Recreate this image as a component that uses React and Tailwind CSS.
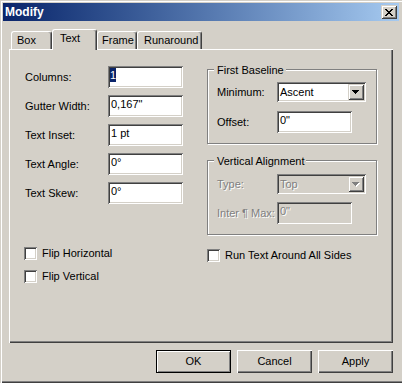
import React from "react";

const sunken =
  "shadow-[inset_1px_1px_#808080,inset_-1px_-1px_#fff,inset_2px_2px_#404040,inset_-2px_-2px_#d4d0c8]";
const disabledText = "text-[#808080] [text-shadow:1px_1px_0_#fff]";

function Edit({ children, disabled }) {
  return (
    <div
      className={`w-[75px] h-[22px] pt-[2px] pl-[3px] leading-[14px] whitespace-nowrap ${
        disabled ? "bg-[#d4d0c8] text-[#808080] [text-shadow:1px_1px_0_#fff]" : "bg-white"
      } shadow-[inset_1px_1px_#808080,inset_-1px_-1px_#fff,inset_2px_2px_#404040,inset_-2px_-2px_#d4d0c8]`}
    >
      {children}
    </div>
  );
}

function Arrow({ disabled }) {
  return (
    <div className="w-[16px] h-[16px] bg-[#d4d0c8] shadow-[inset_1px_1px_#d4d0c8,inset_-1px_-1px_#404040,inset_2px_2px_#fff,inset_-2px_-2px_#808080] flex items-center justify-center">
      <svg width="8" height="5" viewBox="0 0 8 5" shapeRendering="crispEdges">
        {disabled && (
          <path d="M1 1h7v1h-7z M2 2h5v1h-5z M3 3h3v1h-3z M4 4h1v1h-1z" fill="#fff" />
        )}
        <path
          d="M0 0h7v1h-7z M1 1h5v1h-5z M2 2h3v1h-3z M3 3h1v1h-1z"
          fill={disabled ? "#808080" : "#000"}
        />
      </svg>
    </div>
  );
}

function Combo({ text, disabled }) {
  return (
    <div
      className={`w-[89px] h-[20px] flex items-center pl-[3px] pr-[2px] ${
        disabled ? "bg-[#d4d0c8]" : "bg-white"
      } shadow-[inset_1px_1px_#808080,inset_-1px_-1px_#fff,inset_2px_2px_#404040,inset_-2px_-2px_#d4d0c8]`}
    >
      <span className={`flex-1 ${disabled ? disabledText : ""}`}>{text}</span>
      <Arrow disabled={disabled} />
    </div>
  );
}

function Check({ label }) {
  return (
    <div className="flex items-center gap-[5px] h-[13px]">
      <div className={`w-[13px] h-[13px] bg-white ${sunken}`} />
      <span className="whitespace-nowrap">{label}</span>
    </div>
  );
}

function Group({ title, children, className }) {
  return (
    <div
      className={`relative w-[170px] h-[75px] border border-[#808080] shadow-[1px_1px_0_#fff,inset_1px_1px_0_#fff] pl-[9px] ${className}`}
    >
      <span className="absolute -top-[6px] left-[6px] bg-[#d4d0c8] pl-[3px] pr-[2px] leading-[13px] whitespace-nowrap">
        {title}
      </span>
      {children}
    </div>
  );
}

function Field({ label, children }) {
  return (
    <div className="flex items-center h-[22px]">
      <span className="w-[83px] whitespace-nowrap">{label}</span>
      {children}
    </div>
  );
}

function Tab({ label, className, selected }) {
  if (selected) {
    return (
      <div
        className={`relative z-10 h-[21px] bg-[#d4d0c8] flex items-center pb-[3px] border-l border-t border-white border-r border-r-[#404040] rounded-t-[3px] shadow-[inset_-1px_0_#808080] ${className}`}
      >
        {label}
      </div>
    );
  }
  return (
    <div
      className={`h-[18px] mb-[1px] flex items-center border-l border-t border-white border-r border-r-[#404040] rounded-t-[3px] shadow-[inset_-1px_0_#808080] ${className}`}
    >
      {label}
    </div>
  );
}

function Button({ label, def }) {
  return (
    <div
      className={`w-[75px] h-[23px] flex items-center justify-center ${
        def
          ? "border border-black shadow-[inset_1px_1px_#fff,inset_-1px_-1px_#808080]"
          : "shadow-[inset_1px_1px_#fff,inset_-1px_-1px_#404040,inset_-2px_-2px_#808080]"
      }`}
    >
      {label}
    </div>
  );
}

export default function App() {
  return (
    <div className="w-[402px] h-[383px] overflow-hidden bg-[#d4d0c8] text-black text-[11px] leading-none font-['Liberation_Sans',Arial,sans-serif] shadow-[inset_1px_1px_#d4d0c8,inset_2px_2px_#fff,inset_0_-1px_#404040,inset_0_-2px_#808080] pt-[3px] px-[3px]">
      {/* Title bar */}
      <div className="h-[18px] flex items-center justify-between bg-linear-to-r from-[#0a246a] to-[#a6caf0]">
        <span className="pl-[2px] text-white font-bold text-[12px]">Modify</span>
        <div className="mr-[2px] w-[16px] h-[14px] bg-[#d4d0c8] shadow-[inset_1px_1px_#d4d0c8,inset_-1px_-1px_#404040,inset_2px_2px_#fff,inset_-2px_-2px_#808080] flex items-center justify-center">
          <svg width="8" height="7" viewBox="0 0 8 7" shapeRendering="crispEdges">
            <path
              d="M0 0h2v1h-2z M6 0h2v1h-2z M1 1h2v1h-2z M5 1h2v1h-2z M2 2h4v1h-4z M3 3h2v1h-2z M2 4h4v1h-4z M1 5h2v1h-2z M5 5h2v1h-2z M0 6h2v1h-2z M6 6h2v1h-2z"
              fill="#000"
            />
          </svg>
        </div>
      </div>

      <div className="px-[6px]">
        {/* Tabs */}
        <div className="relative z-10 mt-[8px] -mb-[1px] h-[21px] flex items-end pl-[2px]">
          <Tab label="Box" className="w-[41px] pl-[5px]" />
          <Tab label="Text" className="w-[45px] pl-[7px]" selected />
          <Tab label="Frame" className="w-[40px] pl-[4px]" />
          <Tab label="Runaround" className="w-[65px] pl-[6px]" />
        </div>

        {/* Panel */}
        <div className="h-[294px] shadow-[inset_1px_1px_#fff,inset_-1px_-1px_#404040,inset_-2px_-2px_#808080] flex items-start">
          {/* Left column */}
          <div className="pl-[16px] pt-[17px] flex flex-col">
            <div className="flex flex-col gap-[7px]">
              <Field label="Columns:">
                <Edit>
                  <span className="inline-block h-[14px] w-[6px] -ml-[1px] bg-[#0a246a] text-white">1</span>
                </Edit>
              </Field>
              <Field label="Gutter Width:">
                <Edit>0,167"</Edit>
              </Field>
              <Field label="Text Inset:">
                <Edit>1 pt</Edit>
              </Field>
              <Field label="Text Angle:">
                <Edit>0°</Edit>
              </Field>
              <Field label="Text Skew:">
                <Edit>0°</Edit>
              </Field>
            </div>
            <div className="mt-[43px] -ml-[1px] flex flex-col gap-[10px]">
              <Check label="Flip Horizontal" />
              <Check label="Flip Vertical" />
            </div>
          </div>

          {/* Right column */}
          <div className="ml-[24px] pt-[20px] flex flex-col">
            <Group title="First Baseline" className="pt-[12px]">
              <div className="flex items-center">
                <span className="w-[60px]">Minimum:</span>
                <Combo text="Ascent" />
              </div>
              <div className="flex items-center mt-[9px]">
                <span className="w-[60px]">Offset:</span>
                <Edit>0"</Edit>
              </div>
            </Group>
            <Group title="Vertical Alignment" className="mt-[16px] pt-[13px]">
              <div className="flex items-center">
                <span className={`w-[60px] ${disabledText}`}>Type:</span>
                <Combo text="Top" disabled />
              </div>
              <div className="flex items-center mt-[8px]">
                <span className={`w-[60px] whitespace-nowrap ${disabledText}`}>Inter ¶ Max:</span>
                <Edit disabled>0"</Edit>
              </div>
            </Group>
            <div className="mt-[14px]">
              <Check label="Run Text Around All Sides" />
            </div>
          </div>
        </div>

        {/* Buttons */}
        <div className="mt-[7px] flex justify-end gap-[6px]">
          <Button label="OK" def />
          <Button label="Cancel" />
          <Button label="Apply" />
        </div>
      </div>
    </div>
  );
}
